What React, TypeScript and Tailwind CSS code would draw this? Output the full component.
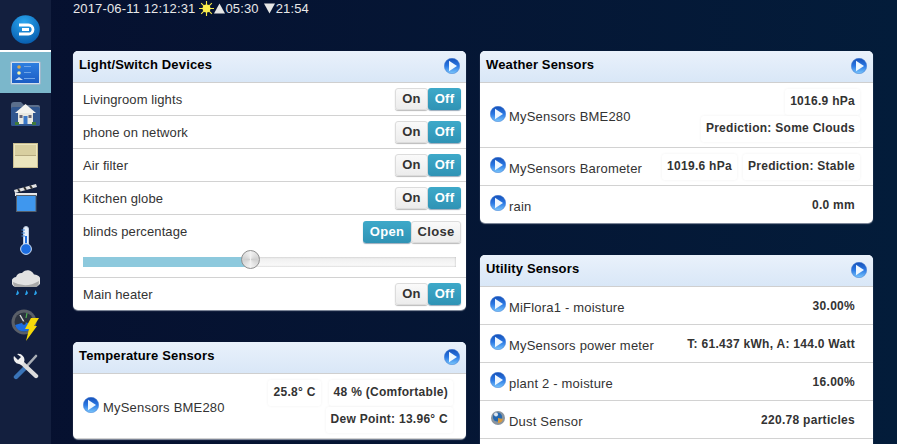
import React from "react";

const Play = ({ className = "" }: { className?: string }) => (
  <svg width="16" height="16" viewBox="0 0 16 16" className={"shrink-0 " + className}>
    <defs>
      <linearGradient id="pg" x1="0" y1="0" x2="0" y2="1">
        <stop offset="0" stopColor="#1650b8" />
        <stop offset="0.5" stopColor="#2a78e4" />
        <stop offset="1" stopColor="#7cc8fc" />
      </linearGradient>
    </defs>
    <circle cx="8" cy="8" r="7.7" fill="url(#pg)" stroke="#3f78d0" strokeWidth="0.5" />
    <path d="M5 2.8 L13 8 L5 13.2 Z" fill="#eef7ff" />
  </svg>
);

const Dust = () => (
  <svg width="16" height="16" viewBox="0 0 16 16" className="mb-[3px] shrink-0">
    <circle cx="8" cy="8" r="7" fill="#8a949e" />
    <circle cx="7.5" cy="7" r="4.6" fill="#2468b0" />
    <path d="M8 8 L13 9 A5 5 0 0 1 8 13 Z" fill="#d99a3c" />
    <circle cx="6" cy="4.5" r="2" fill="#dce6f0" />
  </svg>
);

const NavItem = ({ children, active, h }: { children: React.ReactNode; active?: boolean; h: string }) => (
  <div className={"flex w-full items-center justify-center " + h + (active ? " border-t-2 border-white bg-[#7bb7cb]" : "")}>{children}</div>
);

const Sidebar = () => (
  <aside className="flex h-[444px] w-[51px] shrink-0 flex-col bg-[#131f3e] pt-[8px]">
    <NavItem h="h-[42px]">
      <svg width="29" height="29" viewBox="0 0 29 29">
        <defs>
          <radialGradient id="lg" cx="0.45" cy="0.25" r="0.85">
            <stop offset="0" stopColor="#2aa5ee" />
            <stop offset="1" stopColor="#0456a8" />
          </radialGradient>
        </defs>
        <circle cx="14.5" cy="14.5" r="14.3" fill="url(#lg)" />
        <path d="M8 10 H17.5 A4.5 4.5 0 0 1 17.5 19 H8 M11 14.5 H18" fill="none" stroke="#fff" strokeWidth="2.8" />
      </svg>
    </NavItem>
    <NavItem active h="h-[43px]">
      <svg width="31" height="24" viewBox="0 0 31 24">
        <defs>
          <linearGradient id="sg" x1="0" y1="0" x2="0" y2="1">
            <stop offset="0" stopColor="#2f7fe0" />
            <stop offset="1" stopColor="#1b5cc4" />
          </linearGradient>
        </defs>
        <rect x="0.5" y="0.5" width="30" height="23" rx="1.5" fill="#cfe0ee" stroke="#9db8cc" />
        <rect x="2" y="2" width="27" height="20" fill="url(#sg)" />
        <circle cx="9" cy="6" r="1.8" fill="#d9a84a" />
        <circle cx="9" cy="12" r="1.8" fill="#f3f0a8" />
        <path d="M5 19 L9 16 L13 19 Z" fill="#c9dcf2" />
        <rect x="14" y="5" width="7" height="1" fill="#6fa5e8" />
        <rect x="14" y="11" width="7" height="1" fill="#6fa5e8" />
        <rect x="14" y="17" width="11" height="1" fill="#6fa5e8" />
      </svg>
    </NavItem>
    <NavItem h="h-[41px]">
      <svg width="31" height="25" viewBox="0 0 31 25">
        <path d="M1 4 Q1 1 4 1 H11 L14 4 H28 Q30 4 30 6 V23 Q30 25 28 25 H3 Q1 25 1 23 Z" fill="#5b6f8c" />
        <rect x="1" y="6" width="29" height="19" rx="2" fill="#31578f" />
        <path d="M15.5 3 L26 12 H5 Z" fill="#f3f3ee" />
        <rect x="8" y="12" width="15" height="11" fill="#e8e8e0" />
        <rect x="13.5" y="15" width="4" height="8" fill="#3a78c8" />
        <rect x="9.5" y="14" width="3" height="3" fill="#667" />
        <rect x="18.5" y="14" width="3" height="3" fill="#667" />
        <rect x="5" y="21" width="4" height="3" fill="#3f7a3a" />
        <rect x="22" y="21" width="4" height="3" fill="#3f7a3a" />
      </svg>
    </NavItem>
    <NavItem h="h-[42px]">
      <svg width="25" height="25" viewBox="0 0 25 25">
        <rect x="0.5" y="0.5" width="24" height="24" fill="#ebe5bd" stroke="#c9bd90" />
        <rect x="2" y="2" width="21" height="10" fill="#d8cfa0" />
        <rect x="2" y="12" width="21" height="1" fill="#b5aa80" />
      </svg>
    </NavItem>
    <NavItem h="h-[42px]">
      <svg width="24" height="29" viewBox="0 0 24 29">
        <path d="M0 7 L22 1 L23 4 L1 10 Z" fill="#e4e4e4" />
        <path d="M4 6 L6 9 M10 4 L12 7 M16 2.5 L18 5.5" stroke="#333" strokeWidth="2" />
        <rect x="1" y="10" width="22" height="3" fill="#e8e8e8" />
        <rect x="2" y="12" width="20.5" height="17" fill="#555f6b" />
        <rect x="3" y="13" width="18.5" height="15" fill="#3f97ee" />
      </svg>
    </NavItem>
    <NavItem h="h-[44px]">
      <svg width="12" height="29" viewBox="0 0 12 29">
        <rect x="3.5" y="0.5" width="5" height="20" rx="2.5" fill="#e8f0fa" stroke="#b9c8dc" />
        <rect x="5" y="10" width="2" height="12" fill="#1c6de0" />
        <circle cx="6" cy="23" r="5.4" fill="#1c6de0" stroke="#cfe0f5" />
        <path d="M1.5 4 H5 M1.5 7 H5 M1.5 10 H5" stroke="#4a90e0" strokeWidth="1.2" />
      </svg>
    </NavItem>
    <NavItem h="h-[38px]">
      <svg width="28" height="27" viewBox="0 0 28 27">
        <path d="M5 19 A5 5 0 0 1 4 9 A6 6 0 0 1 10 5 A7 7 0 0 1 22 6.5 A6 6 0 0 1 23 19 Z" fill="#e2e2e2" />
        <path d="M1 14 Q14 21 27 13 Q27 19 23 19 H5 Q1 19 1 14Z" fill="#a9a9a9" />
        <path d="M4 27 L5.5 22 L7 25 Q6 27.5 4 27Z M13 27 L14.5 22 L16 25 Q15 27.5 13 27Z M22 27 L23.5 22 L25 25 Q24 27.5 22 27Z" fill="#2aa4ee" />
      </svg>
    </NavItem>
    <NavItem h="h-[49px]">
      <svg width="29" height="32" viewBox="0 0 29 32">
        <circle cx="13" cy="13" r="12.5" fill="#5a5f68" />
        <circle cx="13" cy="13" r="9.5" fill="#2c3340" />
        <path d="M4 16 A9.5 9.5 0 0 0 22 16 L14 13 Z" fill="#1c6de0" />
        <path d="M13 13 L9 6" stroke="#dddddd" strokeWidth="1.4" />
        <path d="M15 9 L16 4" stroke="#4eb04e" strokeWidth="1.2" />
        <circle cx="13" cy="14" r="1.8" fill="#333" />
        <path d="M20 9 L28 9 L23 17 L26 17 L15 32 L18 20 L14 20 Z" fill="#f5d90a" />
      </svg>
    </NavItem>
    <NavItem h="h-[35px]">
      <svg width="26" height="27" viewBox="0 0 26 27">
        <path d="M3 24 L13 14" stroke="#3a74b8" strokeWidth="4.4" strokeLinecap="round" />
        <path d="M13 14 L23 3" stroke="#a9aeb5" strokeWidth="2.6" strokeLinecap="round" />
        <path d="M8 9 L23 23" stroke="#dcdcdc" strokeWidth="4.4" strokeLinecap="round" />
        <path d="M1 3 L5 7 L8 4 L4 1 A6 6 0 0 1 11 9 L9 12 L6 11 A6 6 0 0 1 1 3 Z" fill="#f0f0f0" />
      </svg>
    </NavItem>
  </aside>
);

const Card = ({ title, children }: { title: string; children: React.ReactNode }) => (
  <section className="w-[393px] overflow-hidden rounded-[5px] bg-white shadow-[0_1px_1px_#8a93a3]">
    <header className="flex h-[32px] items-center justify-between border-b border-[#cfcfcf] bg-gradient-to-b from-[#e9f1fb] to-[#d9e7f7] pl-[6px] pr-[6px]">
      <h2 className="mb-[4px] text-[13px] font-bold tracking-[0.15px] text-black">{title}</h2>
      <Play className="mb-[2px]" />
    </header>
    {children}
  </section>
);

const Seg = ({ a, b, aw, bw, first }: { a: string; b: string; aw: string; bw: string; first?: boolean }) => {
  const on = "flex h-[22px] items-center justify-center rounded-[3px] bg-gradient-to-b from-[#3ea9c9] to-[#2f93b5] text-white shadow-[0_1px_1px_#9ab]";
  const off = "flex h-[22px] items-center justify-center rounded-[3px] border border-[#dcdcdc] bg-gradient-to-b from-[#fafafa] to-[#ececec] text-[#333] shadow-[0_1px_1px_#bbb]";
  return (
    <div className="flex text-[13px] font-bold tracking-[0.3px]">
      <div className={aw + " " + (first ? on : off)}>{a}</div>
      <div className={bw + " " + (first ? off : on)}>{b}</div>
    </div>
  );
};

const SwitchRow = ({ label, h = "h-[33px]" }: { label: string; h?: string }) => (
  <div className={"flex items-center justify-between border-b border-[#d2d2d2] pl-[10px] pr-[5px] last:border-b-0 " + h}>
    <span className="pt-[1px] text-[13px] tracking-[0.1px] text-[#333]">{label}</span>
    <Seg a="On" b="Off" aw="w-[33px]" bw="w-[33px]" />
  </div>
);

const Val = ({ children }: { children: React.ReactNode }) => (
  <div className="flex h-[26px] items-center justify-end rounded-[3px] bg-white px-[5px] pb-[2px] text-[12px] font-bold tracking-[0.28px] whitespace-nowrap text-[#333] shadow-[0_0_3px_#f0f0f0]">
    {children}
  </div>
);

const Plain = ({ children }: { children: React.ReactNode }) => (
  <div className="pr-[18px] text-[12px] font-bold tracking-[0.28px] whitespace-nowrap text-[#333]">{children}</div>
);

const Sensor = ({ name, icon, gap = "gap-[3px]" }: { name: string; icon?: React.ReactNode; gap?: string }) => (
  <div className={"flex items-center " + gap}>
    {icon || <Play className="mb-[3px]" />}
    <span className="mt-[4px] text-[13px] tracking-[0.2px] text-[#333]">{name}</span>
  </div>
);

const Row38 = ({ name, value, icon }: { name: string; value: string; icon?: React.ReactNode }) => (
  <div className="flex h-[38px] items-center justify-between border-b border-[#d2d2d2] pl-[10px]">
    <Sensor name={name} icon={icon} />
    <Plain>{value}</Plain>
  </div>
);

const Tri = ({ d, className = "" }: { d: string; className?: string }) => (
  <svg width="11" height="11" viewBox="0 0 11 11" className={"mt-[2px] shrink-0 " + className}>
    <path d={d} fill="#e6e6e6" />
  </svg>
);

export default function App() {
  return (
    <div className="flex h-[444px] w-[897px] overflow-hidden bg-gradient-to-r from-[#06102f] to-[#031c3a] font-['Liberation_Sans',Arial,sans-serif]">
      <Sidebar />
      <main className="min-w-0 flex-1 pl-[22px]">
        <div className="flex h-[51px] items-start pt-[1px] text-[13px] tracking-[0.14px] text-[#e8e8e8]">
          <span className="leading-[15px]">2017-06-11 12:12:31</span>
          <svg width="15" height="15" viewBox="0 0 16 16" className="ml-[4px] shrink-0">
            <g stroke="#f6e84a" strokeWidth="1.2">
              <path d="M8 0 V16 M0 8 H16 M2.3 2.3 L13.7 13.7 M13.7 2.3 L2.3 13.7" />
            </g>
            <circle cx="8" cy="8" r="4.2" fill="#fbee4e" />
          </svg>
          <Tri d="M5.5 0.5 L11 10.5 H0 Z" />
          <span className="leading-[15px]">05:30</span>
          <Tri d="M0 0.5 H11 L5.5 10.5 Z" className="ml-[5px]" />
          <span className="ml-[1px] leading-[15px]">21:54</span>
        </div>
        <div className="flex gap-[14px]">
          <div className="flex flex-col gap-[32px]">
            <Card title="Light/Switch Devices">
              <SwitchRow label="Livingroom lights" />
              <SwitchRow label="phone on network" />
              <SwitchRow label="Air filter" />
              <SwitchRow label="Kitchen globe" />
              <div className="h-[63px] border-b border-[#d2d2d2] pr-[5px] pl-[10px]">
                <div className="flex h-[33px] items-center justify-between">
                  <span className="pt-[1px] text-[13px] tracking-[0.1px] text-[#333]">blinds percentage</span>
                  <Seg a="Open" b="Close" aw="w-[48px]" bw="w-[50px]" first />
                </div>
                <div className="relative mt-[9px] mr-[5px] flex h-[10px] bg-gradient-to-b from-[#eeeeee] to-[#fbfbfb] shadow-[inset_0_0_2px_#aaa]">
                  <div className="h-full w-[167px] bg-[#8dc9dd]" />
                  <div className="absolute top-[-7px] left-[158px] h-[19px] w-[19px] rounded-full border border-[#8f8f8f] bg-[conic-gradient(#f2f2f2,#d0d0d0,#f2f2f2,#d0d0d0,#f2f2f2)]" />
                </div>
              </div>
              <SwitchRow label="Main heater" h="h-[32px]" />
            </Card>
            <Card title="Temperature Sensors">
              <div className="flex h-[65px] items-center justify-between border-b border-[#d2d2d2] pr-[13px] pl-[10px]">
                <Sensor name="MySensors BME280" gap="gap-[4px]" />
                <div className="flex flex-col items-end gap-[1px]">
                  <div className="flex gap-[8px]">
                    <Val>25.8° C</Val>
                    <Val>48 % (Comfortable)</Val>
                  </div>
                  <Val>Dew Point: 13.96° C</Val>
                </div>
              </div>
            </Card>
          </div>
          <div className="flex flex-col gap-[32px]">
            <Card title="Weather Sensors">
              <div className="flex h-[65px] items-center justify-between border-b border-[#d2d2d2] pr-[13px] pl-[10px]">
                <Sensor name="MySensors BME280" />
                <div className="flex flex-col items-end gap-[1px]">
                  <Val>1016.9 hPa</Val>
                  <Val>Prediction: Some Clouds</Val>
                </div>
              </div>
              <div className="flex h-[38px] items-center justify-between border-b border-[#d2d2d2] pr-[13px] pl-[10px]">
                <Sensor name="MySensors Barometer" />
                <div className="flex gap-[6px]">
                  <Val>1019.6 hPa</Val>
                  <Val>Prediction: Stable</Val>
                </div>
              </div>
              <div className="flex h-[37px] items-center justify-between pl-[10px]">
                <Sensor name="rain" />
                <Plain>0.0 mm</Plain>
              </div>
            </Card>
            <Card title="Utility Sensors">
              <Row38 name="MiFlora1 - moisture" value="30.00%" />
              <Row38 name="MySensors power meter" value="T: 61.437 kWh, A: 144.0 Watt" />
              <Row38 name="plant 2 - moisture" value="16.00%" />
              <Row38 name="Dust Sensor" value="220.78 particles" icon={<Dust />} />
              <div className="h-[20px]" />
            </Card>
          </div>
        </div>
      </main>
    </div>
  );
}
